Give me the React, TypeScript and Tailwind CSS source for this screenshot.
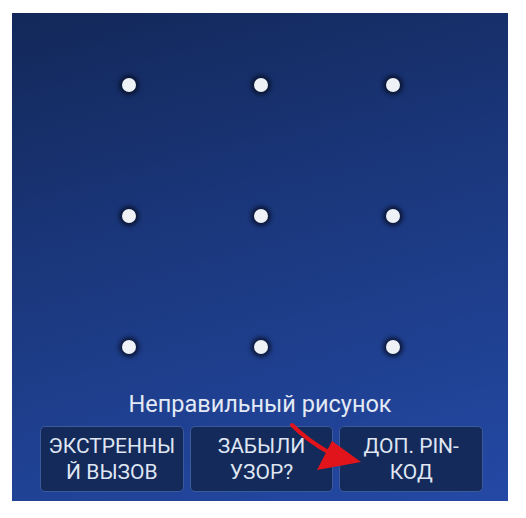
import React from 'react';

// Pattern lock screen after a wrong attempt
const dots = Array.from({ length: 9 }, (_, i) => i);

const buttons = [
  ['ЭКСТРЕННЫ', 'Й ВЫЗОВ'],
  ['ЗАБЫЛИ', 'УЗОР?'],
  ['ДОП. PIN-', 'КОД'],
];

export default function App() {
  return (
    <div className="w-[526px] h-[518px] bg-white pl-[12px] pt-[13px]">
      <div
        className="relative w-[496px] h-[488px] flex flex-col bg-[linear-gradient(165deg,#132859_0%,#1b387e_45%,#2449a5_100%)]"
        style={{ fontFamily: 'Roboto, "Noto Sans", sans-serif' }}
      >
        {/* Pattern grid */}
        <div className="grid grid-cols-3 gap-y-[111px] w-[396px] ml-[51px] pt-[62px]">
          {dots.map((d) => (
            <div key={d} className="h-[20px] flex items-center justify-center">
              <div className="w-[14px] h-[14px] rounded-full bg-[#eef1f6] shadow-[0_0_4px_3px_rgba(6,14,36,0.8)]"></div>
            </div>
          ))}
        </div>

        <p className="mt-[33px] text-center text-[23.5px] leading-[29px] text-[#e3eaf5]">
          Неправильный рисунок
        </p>

        {/* Actions */}
        <div className="mt-[7px] flex gap-[6px] pl-[28px] pr-[25px]">
          {buttons.map((lines) => (
            <div
              key={lines[0]}
              className="flex-1 h-[66px] rounded-[5px] border border-[#3a5a9c] bg-[#142a5b] flex flex-col items-center justify-center text-[21px] leading-[26px] text-[#dfe6f2]"
            >
              <span>{lines[0]}</span>
              <span>{lines[1]}</span>
            </div>
          ))}
        </div>

        {/* Red annotation arrow */}
        <svg
          className="absolute inset-0 pointer-events-none"
          width="496"
          height="488"
          viewBox="0 0 496 488"
        >
          <path
            d="M280 412 Q296 428 318 440"
            fill="none"
            stroke="#e0141a"
            strokeWidth="4"
            strokeLinecap="round"
          />
          <polygon points="320,428 349,449 305,457" fill="#e0141a" />
        </svg>
      </div>
    </div>
  );
}
